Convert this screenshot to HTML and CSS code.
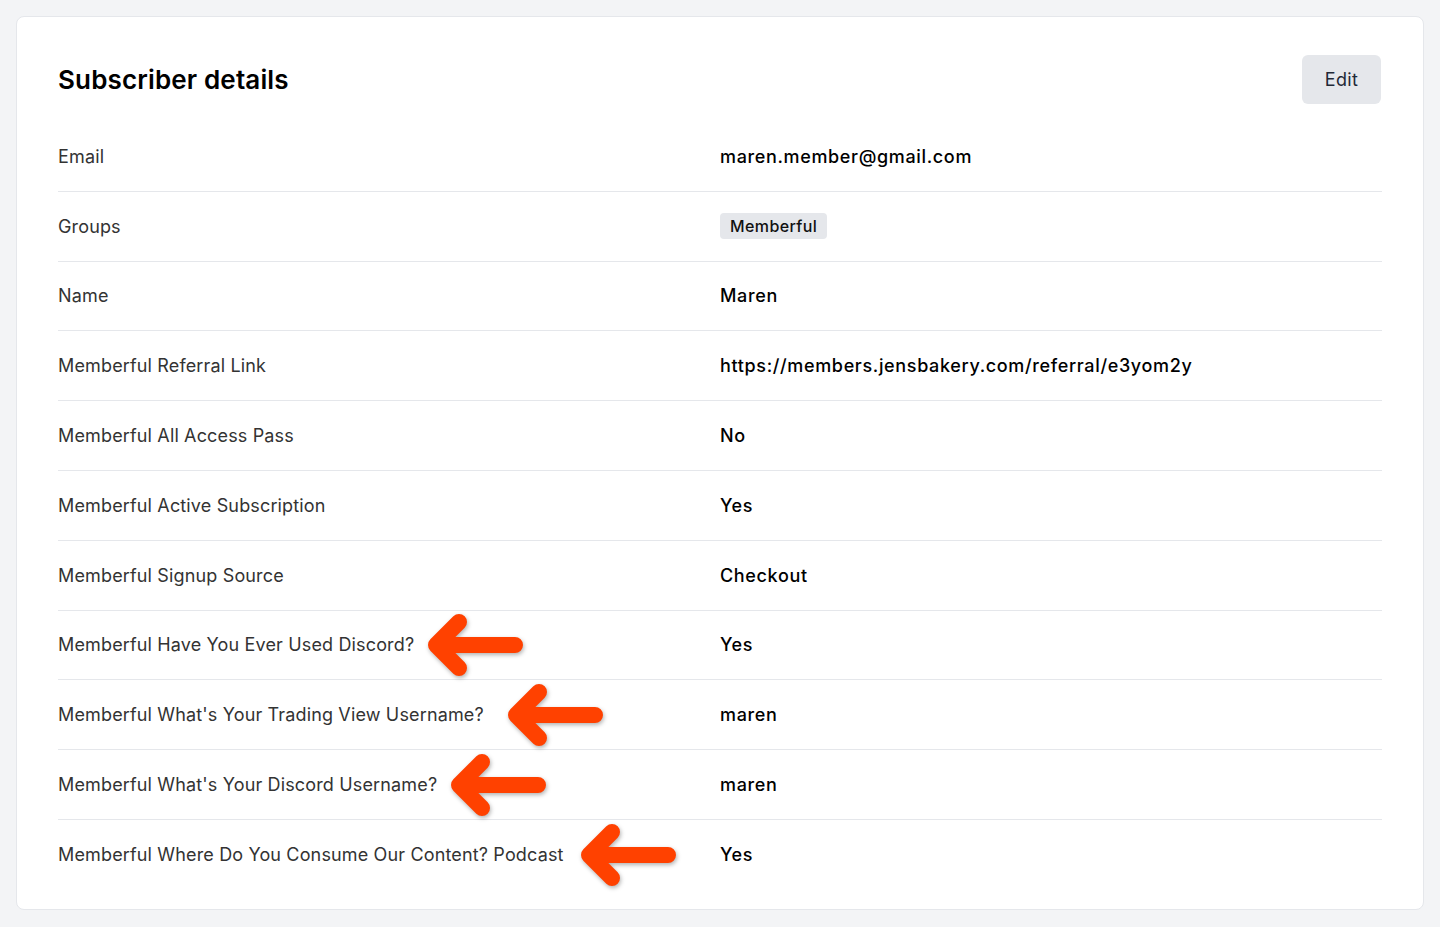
FILE: index.html
```html
<!DOCTYPE html>
<html lang="en">
<head>
  <meta charset="UTF-8" />
  <meta name="viewport" content="width=device-width, initial-scale=1.0"/>
  <title>Subscriber details</title>
  <link rel="stylesheet" href="styles.css">
</head>
<body>
  <div class="subscriber-card">
    <div class="card-header">
      <h2>Subscriber details</h2>
      <button class="edit-button" type="button">Edit</button>
    </div>

    <div class="detail-list">
      <div class="detail-row">
        <div class="detail-label">Email</div>
        <div class="detail-value">maren.member@gmail.com</div>
      </div>
      <div class="detail-row">
        <div class="detail-label">Groups</div>
        <div class="detail-value"><span class="group-badge">Memberful</span></div>
      </div>
      <div class="detail-row">
        <div class="detail-label">Name</div>
        <div class="detail-value">Maren</div>
      </div>
      <div class="detail-row">
        <div class="detail-label">Memberful Referral Link</div>
        <div class="detail-value">https://members.jensbakery.com/referral/e3yom2y</div>
      </div>
      <div class="detail-row">
        <div class="detail-label">Memberful All Access Pass</div>
        <div class="detail-value">No</div>
      </div>
      <div class="detail-row">
        <div class="detail-label">Memberful Active Subscription</div>
        <div class="detail-value">Yes</div>
      </div>
      <div class="detail-row">
        <div class="detail-label">Memberful Signup Source</div>
        <div class="detail-value">Checkout</div>
      </div>
      <div class="detail-row">
        <div class="detail-label">
          <span class="label-text">Memberful Have You Ever Used Discord?
            <svg class="callout-arrow" viewBox="0 0 100 78" fill="none" stroke="currentColor" stroke-width="16" stroke-linecap="round" stroke-linejoin="round"><path d="M89 39H10M33 16L10 39L33 62"/></svg>
          </span>
        </div>
        <div class="detail-value">Yes</div>
      </div>
      <div class="detail-row">
        <div class="detail-label">
          <span class="label-text">Memberful What's Your Trading View Username?
            <svg class="callout-arrow callout-arrow--far" viewBox="0 0 100 78" fill="none" stroke="currentColor" stroke-width="16" stroke-linecap="round" stroke-linejoin="round"><path d="M89 39H10M33 16L10 39L33 62"/></svg>
          </span>
        </div>
        <div class="detail-value">maren</div>
      </div>
      <div class="detail-row">
        <div class="detail-label">
          <span class="label-text">Memberful What's Your Discord Username?
            <svg class="callout-arrow" viewBox="0 0 100 78" fill="none" stroke="currentColor" stroke-width="16" stroke-linecap="round" stroke-linejoin="round"><path d="M89 39H10M33 16L10 39L33 62"/></svg>
          </span>
        </div>
        <div class="detail-value">maren</div>
      </div>
      <div class="detail-row">
        <div class="detail-label">
          <span class="label-text">Memberful Where Do You Consume Our Content? Podcast
            <svg class="callout-arrow callout-arrow--near" viewBox="0 0 100 78" fill="none" stroke="currentColor" stroke-width="16" stroke-linecap="round" stroke-linejoin="round"><path d="M89 39H10M33 16L10 39L33 62"/></svg>
          </span>
        </div>
        <div class="detail-value">Yes</div>
      </div>
    </div>
  </div>
</body>
</html>
```

FILE: styles.css
```css
body {
  margin: 0;
  padding: 16px;
  background: #f3f4f6;
  font-family: Inter, "Noto Sans", sans-serif;
  color: #111827;
}

.subscriber-card {
  background: #ffffff;
  border: 1px solid #e5e7eb;
  border-radius: 8px;
  padding: 38px 41px 19px 41px;
}

.card-header {
  display: flex;
  justify-content: space-between;
  align-items: center;
  margin-bottom: 18px;
}

.card-header h2 {
  margin: 0;
  font-size: 26px;
  font-weight: 600;
  letter-spacing: 0.15px;
  color: #000000;
}

.edit-button {
  background: #e5e7eb;
  border: none;
  border-radius: 6px;
  width: 79px;
  height: 49px;
  margin-right: 1px;
  font-family: inherit;
  font-size: 18px;
  letter-spacing: 0.3px;
  color: #1f2937;
  cursor: pointer;
}

.detail-row {
  display: grid;
  grid-template-columns: 1fr 1fr;
  align-items: center;
  height: 69.8px;
  border-bottom: 1px solid #e5e7eb;
  box-sizing: border-box;
}

.detail-row:last-child {
  border-bottom: none;
}

.detail-label {
  font-size: 18px;
  letter-spacing: 0.15px;
  color: #333333;
}

.label-text {
  position: relative;
}

.detail-value {
  font-size: 18px;
  font-weight: 500;
  letter-spacing: 0.65px;
  color: #000000;
}

.group-badge {
  display: inline-block;
  background: #e5e7eb;
  border-radius: 4px;
  padding: 3px 10px;
  font-size: 16px;
  font-weight: 500;
  letter-spacing: 0.4px;
  color: #111111;
}

.callout-arrow {
  position: absolute;
  left: calc(100% + 12px);
  top: 50%;
  width: 100px;
  height: 78px;
  margin-top: -39px;
  color: #ff4100;
  filter: drop-shadow(1px 2px 2px rgba(0, 0, 0, 0.3));
}

.callout-arrow--far {
  left: calc(100% + 22px);
}

.callout-arrow--near {
  left: calc(100% + 15px);
}
```
